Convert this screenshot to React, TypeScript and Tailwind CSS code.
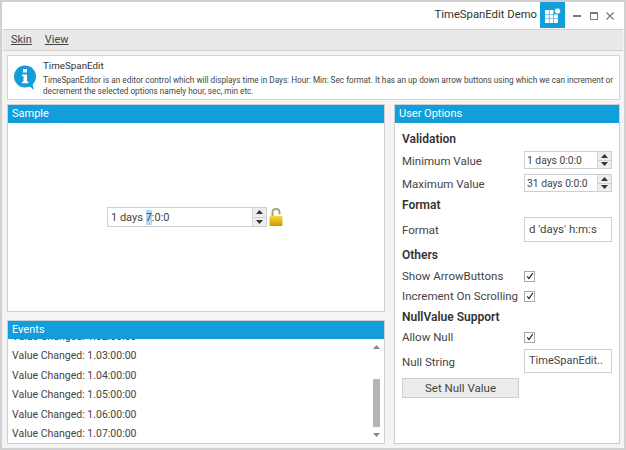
const font = { fontFamily: 'Roboto, "Noto Sans", sans-serif' };

function Up() {
  return <svg width="7" height="4" viewBox="0 0 7 4"><path d="M3.5 0L7 4H0z" fill="#333" /></svg>;
}
function Down() {
  return <svg width="7" height="4" viewBox="0 0 7 4"><path d="M0 0h7L3.5 4z" fill="#333" /></svg>;
}

function Spin({ h }: { h: string }) {
  return (
    <div className={`flex flex-col w-[14px] shrink-0 ${h} border-l border-[#d8d8d8]`}>
      <div className="flex-1 flex items-center justify-center bg-[#eeeeee] border-b border-[#d0d0d0]"><Up /></div>
      <div className="flex-1 flex items-center justify-center bg-[#eeeeee]"><Down /></div>
    </div>
  );
}

function Header({ children }: { children: string }) {
  return <div className="h-[18px] shrink-0 bg-[#119eda] text-white text-[11px] leading-[17px] pl-1">{children}</div>;
}

function Check() {
  return (
    <div className="w-[11px] h-[11px] border border-[#a8a8a8] bg-white flex items-center justify-center">
      <svg width="8" height="8" viewBox="0 0 8 8"><path d="M1.2 4.4L3 6.6L6.8 1" fill="none" stroke="#222" strokeWidth="1.2" /></svg>
    </div>
  );
}

function Row({ label, children, cls, lift }: { label: string; children: React.ReactNode; cls: string; lift: string }) {
  return (
    <div className={`flex items-center justify-between ${cls}`}>
      <span className={`text-[11.5px] text-[#444] whitespace-nowrap ${lift}`}>{label}</span>
      <div className="w-[88px] flex">{children}</div>
    </div>
  );
}

function SmallSpin({ value }: { value: string }) {
  return (
    <div className="w-[88px] h-[18px] border border-[#cfcfcf] flex items-center bg-white">
      <span className="flex-1 text-[10.3px] text-[#444] pl-[2px] pt-[1px] whitespace-nowrap overflow-hidden">{value}</span>
      <Spin h="h-[16px]" />
    </div>
  );
}

const events = ["1.03:00:00", "1.04:00:00", "1.05:00:00", "1.06:00:00", "1.07:00:00"];

export default function App() {
  return (
    <div style={font} className="w-[626px] h-[450px] border-2 border-[#d0d0d0] bg-[#f4f4f4] flex flex-col overflow-hidden text-[#444]">
      <div className="h-[27px] shrink-0 bg-white flex items-center justify-end">
        <span className="text-[11.3px] text-[#333] mr-[3px]">TimeSpanEdit Demo</span>
        <div className="w-[25px] h-[26px] mb-[1px] bg-[#119eda] flex items-center justify-center">
          <svg width="17" height="15" viewBox="0 0 17 15">
            <path d="M1 2h3.9v3.9H1zM5.5 2h3.9v3.9H5.5zM1 6.5h3.9v3.9H1zM5.5 6.5h3.9v3.9H5.5zM10 6.5h3.9v3.9H10zM1 11h3.9v3.9H1zM5.5 11h3.9v3.9H5.5zM10 11h3.9v3.9H10z" fill="#fff" />
            <circle cx="13.5" cy="3" r="3" fill="#fff" stroke="#119eda" strokeWidth="0.7" />
          </svg>
        </div>
        <div className="w-[16px] flex justify-end"><div className="w-[8px] h-[2px] bg-[#777]" /></div>
        <div className="w-[17px] flex justify-end"><div className="w-[8px] h-[8px] border border-[#777] border-t-2" /></div>
        <div className="w-[16px] flex justify-end mr-[10px]">
          <svg width="8" height="8" viewBox="0 0 8 8"><path d="M0.5 0.5L7.5 7.5M7.5 0.5L0.5 7.5" stroke="#777" strokeWidth="1.2" /></svg>
        </div>
      </div>
      <div className="h-[22px] shrink-0 mx-[1px] bg-[#e9e9e9] border-y border-[#d0d0d0] flex items-center text-[11px] text-[#444] pl-[8px] gap-[13px]">
        <span className="underline underline-offset-1 decoration-1">Skin</span>
        <span className="underline underline-offset-1 decoration-1">View</span>
      </div>
      <div className="flex-1 flex flex-col pl-[5px] pr-[4px] pt-[4px] pb-[4px] min-h-0">
        <div className="h-[45px] shrink-0 bg-white border border-[#d4d4d4] flex items-center">
          <svg width="24" height="26" viewBox="0 0 24 26" className="ml-[5px] mr-[6px] shrink-0">
            <circle cx="12" cy="11.5" r="11" fill="#119eda" />
            <path d="M15 20L21 25L19 17z" fill="#119eda" />
            <rect x="10" y="4" width="4" height="3.5" fill="#fff" />
            <path d="M9 9.5h5v7h1.5v1.8h-6.5v-1.8h1.5v-5.2H9z" fill="#fff" />
          </svg>
          <div className="flex flex-col">
            <span className="text-[9.8px] leading-[14px] text-[#333] mb-[2px]">TimeSpanEdit</span>
            <span className="text-[8.2px] leading-[11px] text-[#444] whitespace-nowrap">TimeSpanEditor is an editor control which will displays time in Days: Hour: Min: Sec format. It has an up down arrow buttons using which we can increment or</span>
            <span className="text-[8.2px] leading-[11px] text-[#444] whitespace-nowrap">decrement the selected options namely hour, sec, min etc.</span>
          </div>
        </div>
        <div className="flex-1 min-h-0 flex gap-[9px] mt-[4px]">
          <div className="w-[378px] shrink-0 flex flex-col gap-[8px]">
            <div className="h-[208px] border border-[#cfcfcf] bg-white flex flex-col">
              <Header>Sample</Header>
              <div className="flex-1 flex items-center pl-[99px]">
                <div className="w-[160px] h-[20px] border border-[#cfcfcf] flex items-center">
                  <span className="flex-1 text-[11px] leading-[15px] text-[#444] pl-[3px] pt-[1px] whitespace-nowrap">1 days <span className="inline-block bg-[#b3d7f9]">7</span>:0:0</span>
                  <Spin h="h-[18px]" />
                </div>
                <svg width="14" height="18" viewBox="0 0 14 18" className="ml-[2px]">
                  <defs>
                    <linearGradient id="lockBody" x1="0" y1="0" x2="0" y2="1">
                      <stop offset="0" stopColor="#f7d93a" />
                      <stop offset="1" stopColor="#c99a06" />
                    </linearGradient>
                  </defs>
                  <path d="M3.5 9V4.5C3.5 2.5 5 1 7 1S10.5 2.5 10.5 4.5V6.5" fill="none" stroke="#a9a37c" strokeWidth="2" />
                  <rect x="0.5" y="8" width="13" height="10" rx="1" fill="url(#lockBody)" />
                </svg>
              </div>
            </div>
            <div className="flex-1 min-h-0 border border-[#cfcfcf] bg-white flex flex-col">
              <Header>Events</Header>
              <div className="flex-1 min-h-0 relative overflow-hidden">
                <div className="text-[10.5px] text-[#444] pl-[4px] leading-[14px] -mt-[9px] flex flex-col gap-[5.4px]">
                  <span>Value Changed: 1.02:00:00</span>
                  {events.map((e) => <span key={e}>Value Changed: {e}</span>)}
                </div>
                <div className="absolute right-[4px] top-0 bottom-0 w-[7px] flex flex-col items-center">
                  <svg width="7" height="4" viewBox="0 0 7 4" className="mt-[6px]"><path d="M3.5 0L7 4H0z" fill="#888" /></svg>
                  <div className="w-[7px] h-[48px] bg-[#b5b5b5] mt-[30px]" />
                  <svg width="7" height="4" viewBox="0 0 7 4" className="mt-[6px]"><path d="M0 0h7L3.5 4z" fill="#888" /></svg>
                </div>
              </div>
            </div>
          </div>
          <div className="w-[226px] shrink-0 border border-[#cfcfcf] bg-white flex flex-col">
            <Header>User Options</Header>
            <div className="flex-1 flex flex-col pl-[7px] pr-[7px] pt-[8px]">
              <div className="text-[12px] font-semibold text-[#333] leading-[16px]">Validation</div>
              <Row label="Minimum Value" lift="pt-[3px]" cls="mt-[4px] h-[18px]"><SmallSpin value="1 days 0:0:0" /></Row>
              <Row label="Maximum Value" lift="pt-[3px]" cls="mt-[5px] h-[18px]"><SmallSpin value="31 days 0:0:0" /></Row>
              <div className="text-[12px] font-semibold text-[#333] leading-[16px] mt-[5px]">Format</div>
              <Row label="Format" lift="pt-[2px]" cls="mt-[4px] h-[25px]">
                <div className="w-[88px] h-[25px] border border-[#cfcfcf] text-[11.5px] flex items-center pl-[4px] whitespace-nowrap">d 'days' h:m:s</div>
              </Row>
              <div className="text-[12px] font-semibold text-[#333] leading-[16px] mt-[5px]">Others</div>
              <Row label="Show ArrowButtons" lift="pt-[2px]" cls="mt-[6px] h-[14px]"><Check /></Row>
              <Row label="Increment On Scrolling" lift="pt-[2px]" cls="mt-[6px] h-[14px]"><Check /></Row>
              <div className="text-[12px] font-semibold text-[#333] leading-[16px] mt-[6px]">NullValue Support</div>
              <Row label="Allow Null" lift="pt-[2px]" cls="mt-[5px] h-[14px]"><Check /></Row>
              <Row label="Null String" lift="pt-[3px]" cls="mt-[5px] h-[24px]">
                <div className="w-[88px] h-[24px] border border-[#cfcfcf] text-[11px] flex items-center pl-[4px] whitespace-nowrap">TimeSpanEdit..</div>
              </Row>
              <div className="mt-[5px] w-[117px] h-[20px] bg-[#ececec] border border-[#cfcfcf] text-[11.5px] flex items-center justify-center pt-[2px]">Set Null Value</div>
            </div>
          </div>
        </div>
      </div>
    </div>
  );
}
